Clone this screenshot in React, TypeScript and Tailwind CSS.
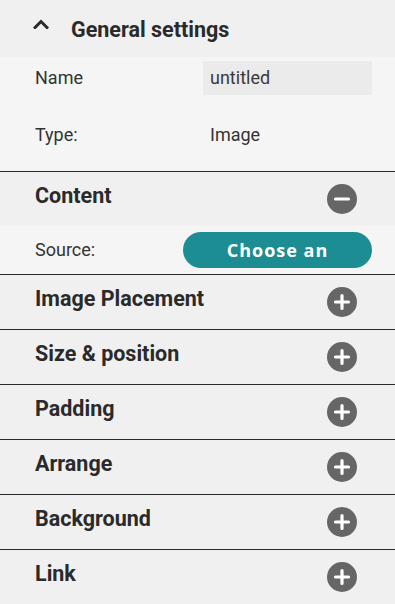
import React from "react";

const PlusIcon = () => (
  <svg width="30" height="30" viewBox="0 0 30 30" className="block">
    <circle cx="15" cy="15" r="15" fill="#666666" />
    <path d="M15 8.5v13M8.5 15h13" stroke="#ffffff" strokeWidth="3.2" strokeLinecap="round" />
  </svg>
);

const MinusIcon = () => (
  <svg width="30" height="30" viewBox="0 0 30 30" className="block">
    <circle cx="15" cy="15" r="15" fill="#666666" />
    <path d="M8.5 15h13" stroke="#ffffff" strokeWidth="3.2" strokeLinecap="round" />
  </svg>
);

const SectionHeader = ({ title, open }: { title: string; open?: boolean }) => (
  <div className="h-[55px] border-t border-[#2b2b2b] bg-[#f0f0f0] flex items-center justify-between pl-[35px] pr-[38px]">
    <span className="text-[21.5px] font-bold text-[#2a2a2a] leading-[28px] mb-[6px]">{title}</span>
    {open ? <MinusIcon /> : <PlusIcon />}
  </div>
);

export default function App() {
  const sections = ["Image Placement", "Size & position", "Padding", "Arrange", "Background", "Link"];
  return (
    <div className="w-[395px] h-[604px] overflow-hidden bg-[#f0f0f0] font-['Roboto',sans-serif] text-[#333333]">
      <div className="h-[57px] flex items-center pl-[33px]">
        <svg width="16" height="10" viewBox="0 0 16 10" className="block mb-[10px]">
          <path d="M2 8.5L8 2.5L14 8.5" fill="none" stroke="#2a2a2a" strokeWidth="3" strokeLinecap="square" />
        </svg>
        <span className="ml-[22px] text-[21.5px] font-bold text-[#2a2a2a] leading-[28px] mt-[2px]">General settings</span>
      </div>
      <div className="h-[114px] bg-[#f5f5f5] pt-[4px]">
        <div className="flex items-center h-[34px] pl-[35px]">
          <span className="w-[168px] text-[18px] leading-[24px]">Name</span>
          <div className="w-[169px] h-[34px] bg-[#ebebeb] flex items-center pl-[7px] text-[18px] leading-[24px] text-[#3a3a3a]">
            untitled
          </div>
        </div>
        <div className="flex items-center h-[24px] mt-[28px] pl-[35px]">
          <span className="w-[175px] text-[18px] leading-[24px]">Type:</span>
          <span className="text-[18px] leading-[24px]">Image</span>
        </div>
      </div>
      <SectionHeader title="Content" open />
      <div className="h-[48px] bg-[#f5f5f5] flex items-center pl-[35px]">
        <span className="w-[148px] text-[18px] leading-[24px]">Source:</span>
        <div className="w-[189px] h-[36px] rounded-full bg-[#1b8d93] flex items-center justify-center overflow-hidden">
          <span className="font-['Open_Sans',sans-serif] font-bold text-[18px] tracking-[1px] text-white leading-[24px]">Choose an</span>
        </div>
      </div>
      {sections.map((s) => (
        <SectionHeader key={s} title={s} />
      ))}
    </div>
  );
}
